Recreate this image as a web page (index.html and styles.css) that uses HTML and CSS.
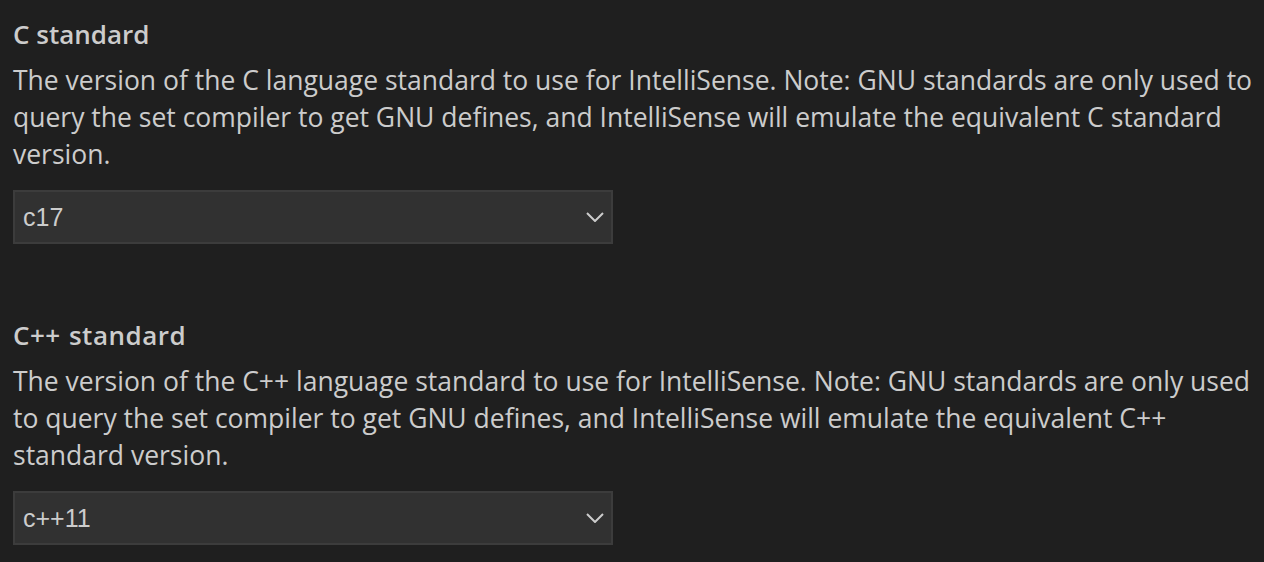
FILE: index.html
```html
<!DOCTYPE html>
<html>
<head>
<meta charset="utf-8">
<link rel="stylesheet" href="styles.css">
</head>
<body>
<div class="settings">
  <section class="setting">
    <div class="title">C standard</div>
    <div class="desc">The version of the C language standard to use for IntelliSense. Note: GNU standards are only used to query the set compiler to get GNU defines, and IntelliSense will emulate the equivalent C standard version.</div>
    <div class="select">
      <span class="value">c17</span>
      <svg class="chev" width="18" height="10" viewBox="0 0 18 10"><path d="M1 1 L9 9 L17 1" fill="none" stroke="#cccccc" stroke-width="2"/></svg>
    </div>
  </section>
  <section class="setting">
    <div class="title wide">C++ standard</div>
    <div class="desc">The version of the C++ language standard to use for IntelliSense. Note: GNU standards are only used to query the set compiler to get GNU defines, and IntelliSense will emulate the equivalent C++ standard version.</div>
    <div class="select">
      <span class="value">c++11</span>
      <svg class="chev" width="18" height="10" viewBox="0 0 18 10"><path d="M1 1 L9 9 L17 1" fill="none" stroke="#cccccc" stroke-width="2"/></svg>
    </div>
  </section>
</div>
</body>
</html>
```
FILE: styles.css
```css
html, body {
  margin: 0;
  padding: 0;
  background: #1f1f1f;
  height: 100%;
  overflow: hidden;
}
.settings {
  display: flex;
  flex-direction: column;
  padding: 16px 2px 0 13px;
  gap: 73px;
  color: #cccccc;
  font-family: "Open Sans", "Noto Sans", sans-serif;
}
.setting {
  display: flex;
  flex-direction: column;
}
.title {
  font-size: 26px;
  font-weight: 600;
  line-height: 36px;
  color: #cccccc;
}
.title.wide {
  word-spacing: 1px;
  letter-spacing: 0.5px;
}
.desc {
  margin-top: 10px;
  font-size: 26.5px;
  line-height: 37px;
}
.select {
  margin-top: 17px;
  height: 50px;
  box-sizing: content-box;
  border: 2px solid #3c3c3c;
  background: #313131;
  display: flex;
  align-items: center;
  justify-content: space-between;
  padding: 0 7px 0 8px;
  width: 581px;
}
.value {
  font-family: "Liberation Sans", Arial, sans-serif;
  font-size: 25px;
  color: #cccccc;
}
.chev {
  display: block;
}
```
